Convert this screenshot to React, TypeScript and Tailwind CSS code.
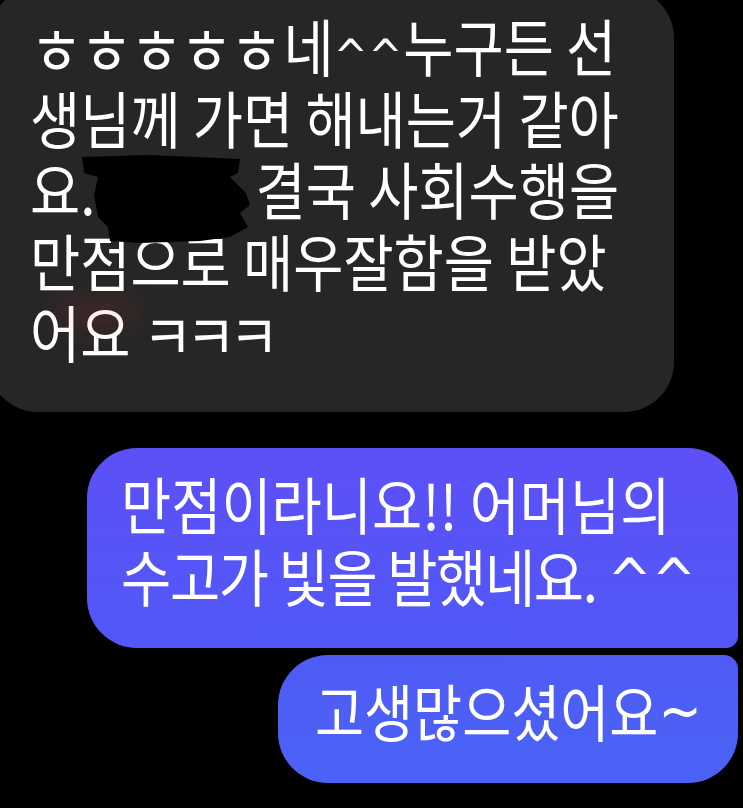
import React from 'react'

const font = { fontFamily: '"Noto Sans CJK KR", "Noto Sans", sans-serif' }
const wide = { fontFamily: '"DejaVu Sans", sans-serif' }

// black marker scribble over a name
function Redaction() {
  return (
    <svg
      className="absolute left-[92px] top-[167px]"
      width="172"
      height="90"
      viewBox="0 0 172 90"
    >
      <path
        d="M2 2 L70 0 L160 4 L158 18 L150 22 L166 38 L170 50 L160 58 L168 72 L150 82 L120 86 L60 88 L30 86 L28 72 L18 62 L14 40 L18 22 L4 18 Z"
        fill="#000"
      />
    </svg>
  )
}

export default function App() {
  return (
    <div
      className="w-[743px] h-[808px] bg-black overflow-hidden text-white"
      style={font}
    >
      {/* incoming */}
      <div className="relative -ml-3 -mt-3 w-[686px] h-[424px] rounded-[50px] bg-[#262626] pl-[42px] pt-[22px]">
        <div className="text-[62px] leading-[71.5px] whitespace-nowrap scale-x-88 origin-left">
          <div>
            <span className="align-[-3px] text-[65px] leading-[40px] tracking-[-3px]">ㅎㅎㅎㅎㅎ</span>
            <span className="ml-[4px]">네</span>
            <span className="text-[46px] leading-[40px] tracking-[1px]" style={wide}>^^</span>
            누구든 선
          </div>
          <div>생님께 가면 해내는거 같아</div>
          <div>
            요.<span className="inline-block w-[182px]" />결국 사회수행을
          </div>
          <div>만점으로 매우잘함을 받았</div>
          <div>
            어요 <span className="align-[-2px] text-[62px] leading-[40px] tracking-[-8px]">ㅋㅋㅋ</span>
          </div>
        </div>
        <Redaction />
        <div className="absolute left-[67px] top-[309px] h-[32px] w-[85px] rounded-full bg-[#ff3040]/10 blur-md" />
      </div>

      {/* outgoing */}
      <div className="mt-9 flex flex-col items-end gap-[7px] pr-[5px]">
        <div className="w-[651px] h-[200px] rounded-[50px] rounded-br-[12px] bg-gradient-to-b from-[#5c50f6] to-[#5158f7] pl-[34px] pt-[19px]">
          <div className="text-[62px] leading-[72px] whitespace-nowrap scale-x-88 origin-left">
            <div>만점이라니요!! 어머님의</div>
            <div className="tracking-[-1.5px]">
              수고가 빛을 발했네요.{' '}
              <span className="text-[60px] leading-[40px] tracking-[0px]" style={wide}>^^</span>
            </div>
          </div>
        </div>
        <div className="w-[460px] h-[128px] rounded-[50px] rounded-tr-[14px] bg-gradient-to-b from-[#4f5bf6] to-[#4a63f5] pl-[37px] pt-[19px]">
          <div className="text-[62px] leading-[72px] whitespace-nowrap scale-x-86 origin-left">
            고생많으셨어요<span className="align-[5px] text-[60px] leading-[40px]" style={wide}>~</span>
          </div>
        </div>
      </div>
    </div>
  )
}
